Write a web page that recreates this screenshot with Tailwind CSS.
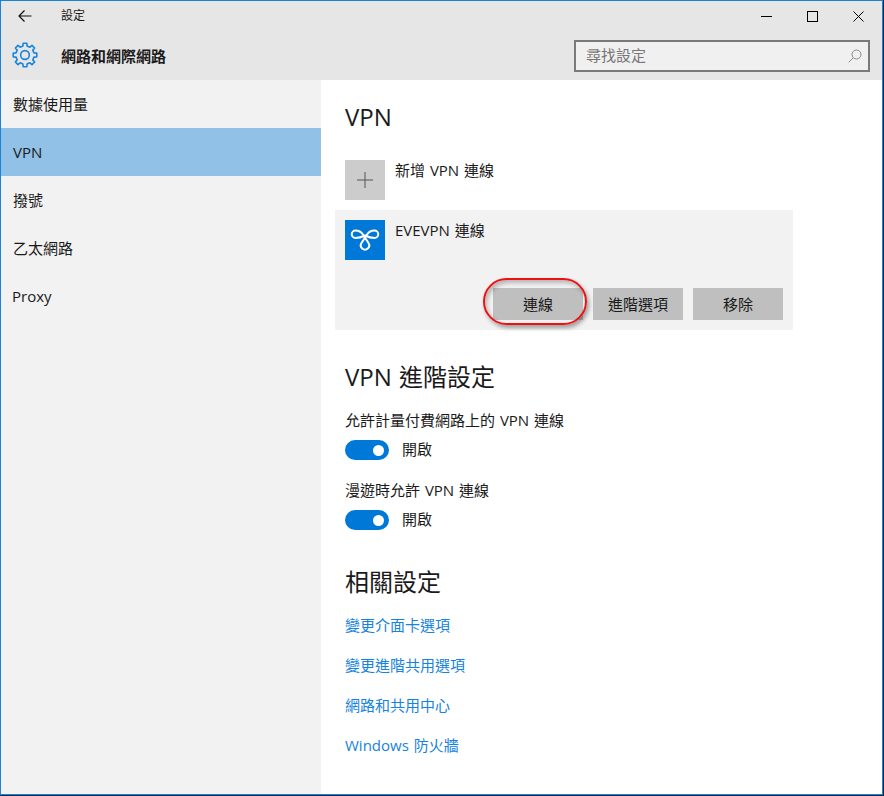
<!DOCTYPE html>
<html lang="zh-Hant">
<head>
  <meta charset="UTF-8" />
  <title>設定</title>
  <script src="https://cdn.jsdelivr.net/npm/@tailwindcss/browser@4"></script>
</head>
<body class="bg-[#10253f]">
  <div class="w-[883px] h-[795px] border border-[#1883d7] bg-white flex flex-col overflow-hidden text-[15px] leading-[20px] text-[#1a1a1a] [word-spacing:1px] font-['Open_Sans','Noto_Sans_CJK_TC',sans-serif]">

    <!-- Title bar -->
    <header class="h-[79px] shrink-0 bg-[#e6e6e6] flex flex-col">
      <div class="h-[30px] flex items-center">
        <svg class="ml-[17px] w-[14px] h-[12px]" viewBox="0 0 14 12" fill="none" stroke="#111" stroke-width="1.2"><path d="M13.5 6H1M6.5.5 1 6l5.5 5.5" /></svg>
        <span class="ml-[29px] text-[12px]">設定</span>
        <div class="ml-auto flex items-center">
          <svg class="w-[11px] h-[11px]" viewBox="0 0 11 11" stroke="#000" stroke-width="1"><path d="M0 5.5h11" /></svg>
          <svg class="ml-[35px] w-[11px] h-[11px]" viewBox="0 0 11 11" fill="none" stroke="#000" stroke-width="1"><rect x=".5" y=".5" width="10" height="10" /></svg>
          <svg class="ml-[35px] mr-[18px] w-[11px] h-[11px]" viewBox="0 0 11 11" stroke="#000" stroke-width="1"><path d="M.5.5l10 10M10.5.5l-10 10" /></svg>
        </div>
      </div>
      <div class="flex-1 flex items-center">
        <svg class="ml-[11px] w-[26px] h-[26px] mt-[-1px]" viewBox="0 0 24 24" fill="none" stroke="#1a86d9" stroke-width="1.5" stroke-linejoin="round">
          <path d="M10.09 3.72 10.28 1.13H13.72L13.91 3.72 16.5 4.79 18.47 3.1 20.9 5.53 19.21 7.5 20.28 10.09 22.87 10.28V13.72L20.28 13.91 19.21 16.5 20.9 18.47 18.47 20.9 16.5 19.21 13.91 20.28 13.72 22.87H10.28L10.09 20.28 7.5 19.21 5.53 20.9 3.1 18.47 4.79 16.5 3.72 13.91 1.13 13.72V10.28L3.72 10.09 4.79 7.5 3.1 5.53 5.53 3.1 7.5 4.79Z" />
          <circle cx="12" cy="12" r="4" />
        </svg>
        <h1 class="ml-[23px] mt-[1px] font-semibold">網路和網際網路</h1>
        <div class="ml-auto mr-[12px] mt-[1px] w-[296px] h-[32px] border-2 border-[#7a7a7a] bg-[#f0f0f0] flex items-center justify-between pl-[10px] pr-[6px] text-[#777777]">
          <span class="mt-[-2px]">尋找設定</span>
          <svg class="w-[14px] h-[14px]" viewBox="0 0 14 14" fill="none" stroke="#8a8a8a" stroke-width="1"><circle cx="8.5" cy="5.5" r="4.5" /><path d="M5.3 8.7.7 13.3" /></svg>
        </div>
      </div>
    </header>

    <div class="flex-1 flex min-h-0">
      <!-- Sidebar -->
      <nav class="w-[320px] shrink-0 bg-[#f2f2f2] flex flex-col">
        <a class="h-[48px] pl-[12px] flex items-center">數據使用量</a>
        <a class="h-[48px] pl-[12px] flex items-center bg-[#91c1e7]">VPN</a>
        <a class="h-[48px] pl-[12px] flex items-center">撥號</a>
        <a class="h-[48px] pl-[12px] flex items-center">乙太網路</a>
        <a class="h-[48px] pl-[11px] flex items-center">Proxy</a>
      </nav>

      <!-- Content -->
      <main class="flex-1 pt-[21px] pl-[24px]">
        <h2 class="text-[24px] leading-[32px]">VPN</h2>

        <div class="mt-[27px] flex gap-[10px]">
          <div class="w-[40px] h-[40px] bg-[#cccccc] flex items-center justify-center">
            <svg class="w-[16px] h-[16px]" viewBox="0 0 16 16" stroke="#555" stroke-width="1"><path d="M8 0v16M0 8h16" /></svg>
          </div>
          <span>新增 VPN 連線</span>
        </div>

        <section class="relative mt-[10px] ml-[-10px] w-[458px] h-[120px] bg-[#f2f2f2] pt-[10px] pl-[10px]">
          <div class="flex gap-[10px]">
            <div class="w-[40px] h-[40px] bg-[#0078d7]">
              <svg class="w-[40px] h-[40px]" viewBox="0 0 40 40" fill="none" stroke="#fff" stroke-width="2">
                <path d="M23.5 23 18 14.5C16 11.5 13.5 10.5 10.5 10.5A3.7 3.7 0 0 0 10.5 18C14 18 17 17 20 15.5 23 17 26 18 29.5 18A3.7 3.7 0 0 0 29.5 10.5C26.5 10.5 24 11.5 22 14.5L16.5 23A4.2 4.2 0 1 0 23.5 23" />
              </svg>
            </div>
            <span>EVEVPN 連線</span>
          </div>
          <div class="absolute right-[10px] bottom-[10px] flex gap-[10px]">
            <button class="w-[90px] h-[32px] bg-[#bfbfbf]">連線</button>
            <button class="w-[90px] h-[32px] bg-[#bfbfbf]">進階選項</button>
            <button class="w-[90px] h-[32px] bg-[#bfbfbf]">移除</button>
          </div>
          <!-- Red marker round the connect button -->
          <div class="absolute left-[148px] top-[68px] w-[104px] h-[47px] rounded-[24px] border-2 border-[#ee1111] shadow-[2px_3px_4px_rgba(0,0,0,0.35),inset_2px_3px_4px_rgba(0,0,0,0.25)]"></div>
        </section>

        <h2 class="mt-[31px] text-[24px] leading-[32px]">VPN 進階設定</h2>

        <p class="mt-[17px]">允許計量付費網路上的 VPN 連線</p>
        <div class="mt-[10px] flex items-center gap-[13px]">
          <span class="w-[44px] h-[20px] rounded-full bg-[#0078d7] flex items-center justify-end pr-[5px]"><span class="w-[11px] h-[11px] rounded-full bg-white"></span></span>
          <span class="mt-[-2px]">開啟</span>
        </div>

        <p class="mt-[20px]">漫遊時允許 VPN 連線</p>
        <div class="mt-[10px] flex items-center gap-[13px]">
          <span class="w-[44px] h-[20px] rounded-full bg-[#0078d7] flex items-center justify-end pr-[5px]"><span class="w-[11px] h-[11px] rounded-full bg-white"></span></span>
          <span class="mt-[-2px]">開啟</span>
        </div>

        <h2 class="mt-[36px] text-[24px] leading-[32px]">相關設定</h2>

        <div class="mt-[17px] flex flex-col gap-[20px] text-[#1683dc]">
          <a>變更介面卡選項</a>
          <a>變更進階共用選項</a>
          <a>網路和共用中心</a>
          <a>Windows 防火牆</a>
        </div>
      </main>
    </div>
  </div>
</body>
</html>
